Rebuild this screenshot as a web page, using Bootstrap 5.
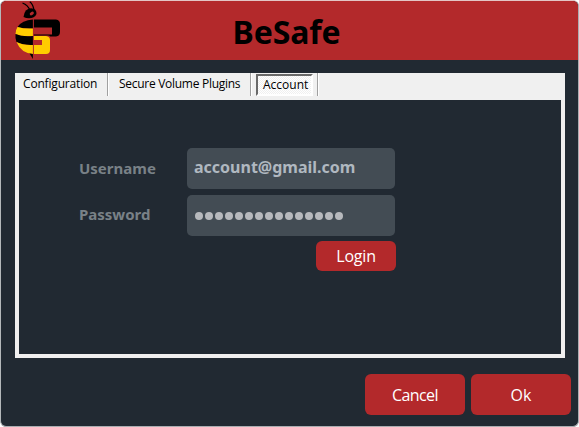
<!DOCTYPE html>
<html lang="en">
<head>
<meta charset="utf-8">
<title>BeSafe</title>
<link href="https://cdn.jsdelivr.net/npm/bootstrap@5.3.0/dist/css/bootstrap.min.css" rel="stylesheet">
<style>
html,body{height:100%}
body{background:#fff;overflow:hidden;font-family:"Open Sans","Noto Sans",sans-serif}
.window-frame{width:579px;height:427px;background:#212932;border:1px solid #aaadb1;border-left-color:#b4b8ba;border-top-color:#e3c5c5;border-radius:6px;overflow:hidden}
.title-bar{height:59px;background:#b3292b;padding-left:13px;display:grid;grid-template-columns:50px 1fr 64px}
.title-bar h1{font:700 32px/1 "Noto Sans",sans-serif;color:#000;text-align:center;margin:15px 0 0;padding-right:5px;letter-spacing:-.15px}
.tab-panel{margin:13px 13px 0 14px;height:285px;border:4px solid #f0efef;border-top:0}
.tab-strip{height:27px;background:#f0f0f0;font-size:12px;line-height:16px;color:#000;margin-left:-4px}
.tab-strip .tab-item{height:23px;border-right:1px solid #a0a0a0;box-shadow:1px 0 #fff;padding-top:3px;white-space:nowrap}
.tab-first{width:93px;padding-left:8px;letter-spacing:-.18px}
.tab-second{width:143px;padding-left:11px;letter-spacing:-.28px}
.tab-third{width:67px}
.tab-on{height:22px;width:57px;margin:1px 0 0 5px;border:2px solid;border-color:#696969 #fff #fff #696969;background:repeating-conic-gradient(#fff 0 25%,#f0f0f0 0 50%) 0 0/2px 2px;padding:1px 0 0 5px}
.login-form{display:grid;grid-template-columns:108px 209px;padding:48px 0 0 60px}
.login-form label{font:700 15px/41px "Noto Sans",sans-serif;color:#798187}
.login-form label.pw-label{line-height:38px}
.login-form .field{width:208px;height:41px;border:0;border-radius:5px;background:#434c54;color:#b0b8c0;font:700 16px/37px "Noto Sans",sans-serif;padding:0 7px 3px;margin-bottom:6px}
.login-form .dots{display:flex;align-items:center;gap:2px;padding:0 8px}
.dots i{width:8px;height:8px;border-radius:50%;background:#b7b9bd}
.btn.act{--bs-btn-color:#fff;--bs-btn-bg:#b3292b;--bs-btn-border-width:0;--bs-btn-border-radius:6px;--bs-btn-padding-y:0;--bs-btn-padding-x:0;--bs-btn-hover-bg:#c63335;--bs-btn-hover-color:#fff;font-size:16px;line-height:24px;width:100px;height:41px}
.btn.act.small-act{width:80px;height:30px;margin:-1px 0 0 129px;letter-spacing:-.2px}
.btn.act.cancel-act{letter-spacing:-.6px}
</style>
</head>
<body>
<main class="window-frame">
<header class="title-bar">
<svg width="50" height="59" viewBox="14 1 50 59" aria-hidden="true">
<path d="M22.500 3Q28 5 30 10.500M29.800 1.700Q33 4 34 10" fill="none" stroke="#000" stroke-width="1.300"/>
<path d="M23.500 17Q24.500 8.500 31 8.200Q36.800 8.500 36.500 14Q34.500 18.300 29 18.300Q26 18.300 23.500 17Z"/>
<ellipse cx="31.800" cy="13.500" rx="2.300" ry="1.500" transform="rotate(-35 31.800 13.500)" fill="#b3292b"/>
<path d="M32.900 19.500V28.500Q24 29 17.500 27Q22 20 32.900 19.500Z"/>
<path d="M17.500 27Q24 29 32.900 28.500V36Q22 37 15.500 34Q15.500 30 17.500 27Z" fill="#fc0"/>
<path d="M15.500 34Q22 37 32.900 36V45Q23 45.500 16.500 42Q15 38 15.500 34Z"/>
<path d="M16.500 42Q23 45.500 32.900 45V54Q21 53 16.500 42Z" fill="#fc0"/>
<path d="M29.500 53.500L32.900 54V59Z"/>
<path d="M33.900 19.500H56Q60 20 60 24V32Q60 36 56 36.500H50Q50 35.500 48 35.500H33.900V34.500H52V27.500H33.900Z"/>
<path d="M33.900 36H46Q50 36.500 50 40V50Q50 54 46 54H33.900V45H42V40H33.900Z" fill="#fc0"/>
</svg>
<h1>BeSafe</h1>
</header>
<section class="tab-panel">
<nav class="tab-strip d-flex">
<span class="tab-item tab-first">Configuration</span>
<span class="tab-item tab-second">Secure Volume Plugins</span>
<span class="tab-item tab-third pt-0"><span class="tab-on d-block">Account</span></span>
</nav>
<form class="login-form">
<label for="u">Username</label><input class="field" id="u" value="account@gmail.com">
<label class="pw-label">Password</label><div class="field dots"><i></i><i></i><i></i><i></i><i></i><i></i><i></i><i></i><i></i><i></i><i></i><i></i><i></i><i></i><i></i></div>
<span></span><button type="button" class="btn act small-act">Login</button>
</form>
</section>
<footer class="d-flex justify-content-end" style="gap:6px;padding:16px 7px 0 0"><button class="btn act cancel-act">Cancel</button><button class="btn act">Ok</button></footer>
</main>
<script src="https://cdn.jsdelivr.net/npm/bootstrap@5.3.0/dist/js/bootstrap.bundle.min.js"></script>
</body>
</html>
